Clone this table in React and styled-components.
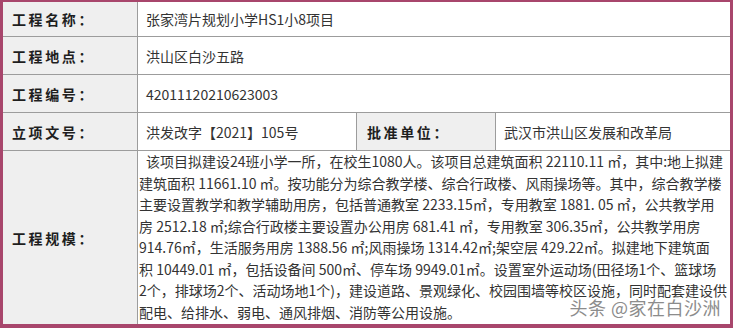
import styled, { createGlobalStyle } from 'styled-components'

const GlobalStyle = createGlobalStyle`
  html, body {
    margin: 0;
    padding: 0;
    background: #ffffff;
  }
  body {
    font-family: "Noto Sans CJK SC", "Noto Sans", sans-serif;
  }
`

const scaleLines = [
  '该项目拟建设24班小学一所，在校生1080人。该项目总建筑面积 22110.11 ㎡，其中:地上拟建',
  '建筑面积 11661.10 ㎡。按功能分为综合教学楼、综合行政楼、风雨操场等。其中，综合教学楼',
  '主要设置教学和教学辅助用房，包括普通教室 2233.15㎡，专用教室 1881. 05 ㎡，公共教学用',
  '房 2512.18 ㎡;综合行政楼主要设置办公用房 681.41 ㎡，专用教室 306.35㎡，公共教学用房',
  '914.76㎡，生活服务用房 1388.56 ㎡;风雨操场 1314.42㎡;架空层 429.22㎡。拟建地下建筑面',
  '积 10449.01 ㎡，包括设备间 500㎡、停车场 9949.01㎡。设置室外运动场(田径场1个、篮球场',
  '2个，排球场2个、活动场地1个)，建设道路、景观绿化、校园围墙等校区设施，同时配套建设供',
  '配电、给排水、弱电、通风排烟、消防等公用设施。',
]

const App = () => {
  return (
    <>
      <GlobalStyle />
      <Frame>
        <Table>
          <Label>工程名称：</Label>
          <Value span={3}>张家湾片规划小学HS1小8项目</Value>

          <Label>工程地点：</Label>
          <Value span={3}>洪山区白沙五路</Value>

          <Label>工程编号：</Label>
          <Value span={3}>42011120210623003</Value>

          <Label>立项文号：</Label>
          <Value>洪发改字【2021】105号</Value>
          <Label pad={10}>批准单位：</Label>
          <Value>武汉市洪山区发展和改革局</Value>

          <Label>工程规模：</Label>
          <Scale>
            {scaleLines.map((line, i) => (
              <Line key={i} first={i === 0}>
                {line}
              </Line>
            ))}
          </Scale>
        </Table>
        <Watermark>头条 @家在白沙洲</Watermark>
      </Frame>
    </>
  )
}

export default App

const Frame = styled.div`
  position: relative;
  width: 733px;
  height: 328px;
  box-sizing: border-box;
  border-style: solid;
  border-color: #a8466c;
  border-width: 2px 3px 4px 3px;
  overflow: hidden;
  background: #9c9c9c;
`

const Table = styled.div`
  display: grid;
  grid-template-columns: 134px 218px 138px 1fr;
  grid-template-rows: 34px 37px 37px 37px 1fr;
  gap: 1px;
  height: 100%;
`

const Label = styled.div`
  display: flex;
  align-items: center;
  padding-left: ${(p) => p.pad || 9}px;
  background: #efefef;
  color: #1e1e1e;
  font-size: 14px;
  font-weight: 700;
  letter-spacing: 2.6px;
  white-space: nowrap;
`

const Value = styled.div`
  grid-column: span ${(p) => p.span || 1};
  display: flex;
  align-items: center;
  padding-left: 8px;
  background: #ffffff;
  color: #333333;
  font-size: 14px;
  white-space: nowrap;
`

const Scale = styled.div`
  grid-column: span 3;
  background: #ffffff;
  padding-left: 1px;
  overflow: hidden;
`

const Line = styled.div`
  height: 21.5px;
  line-height: 21.5px;
  font-size: 14px;
  color: #333333;
  white-space: nowrap;
  padding-left: ${(p) => (p.first ? 7 : 0)}px;
`

const Watermark = styled.div`
  position: absolute;
  right: 9px;
  bottom: 4px;
  font-size: 18px;
  color: #8c8c8c;
  letter-spacing: 0.5px;
  text-shadow: 0 0 2px #ffffff, 0 0 2px #ffffff;
  white-space: nowrap;
`
